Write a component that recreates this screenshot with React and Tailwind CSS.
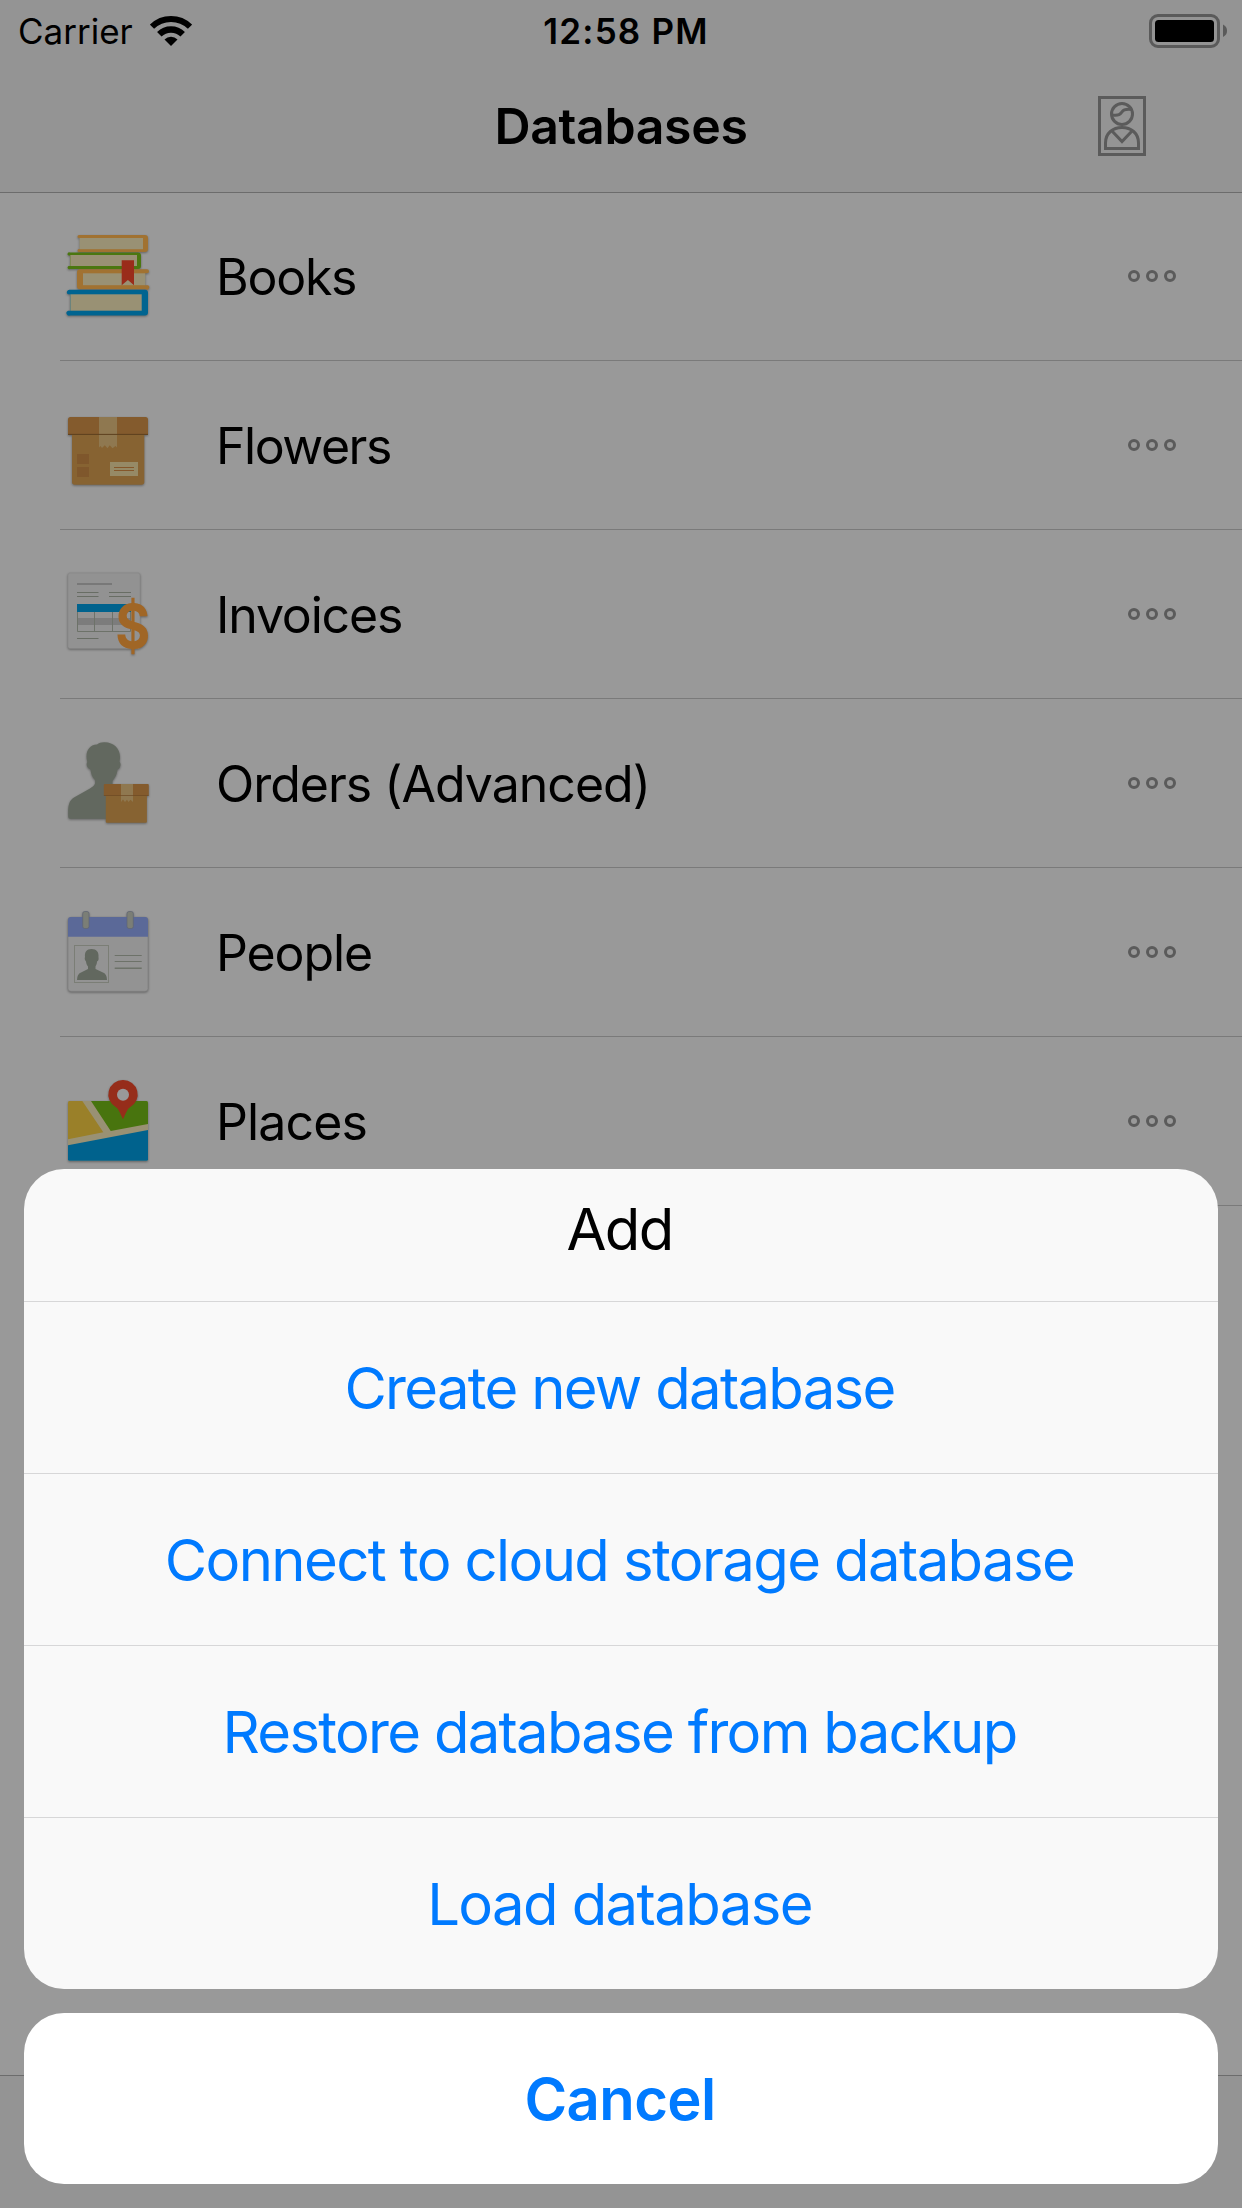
import React from 'react';

const ICON = 'w-[80px] h-[80px] shrink-0 overflow-visible [filter:drop-shadow(0_1px_1px_rgba(0,0,0,0.35))]';

function BooksIcon() {
  return (
    <svg className={`mb-[3px] ${ICON}`} viewBox="0 0 80 80">
      <path d="M11 0H77a3 3 0 0 1 3 3v11a3 3 0 0 1-3 3H11a1.500 1.500 0 0 1 0-3H12V3H11a1.500 1.500 0 0 1 0-3Z" fill="#a17231" />
      <rect x="11.500" y="3" width="63.500" height="11.200" fill="#999174" />
      <path d="M2 17.500H70a3 3 0 0 1 3 3V31a3 3 0 0 1-3 3H2a1.500 1.500 0 0 1-1.500-3H2V20.500H.5A1.500 1.500 0 0 1 2 17.500Z" fill="#4b770f" />
      <rect x="2.300" y="20" width="66.700" height="11" fill="#999174" />
      <path d="M12 34.300H79a1.500 1.500 0 0 1 0 4H77V50.200h3a2 2 0 0 1-2 4.100H12a3 3 0 0 1-3-3v-14a3 3 0 0 1 3-3Z" fill="#a17231" />
      <rect x="15" y="38.300" width="62.300" height="11.900" fill="#999174" />
      <path d="M2 54.800H77a3 3 0 0 1 3 3V77.500a3 3 0 0 1-3 3H2a2 2 0 0 1-2-4.800H2V59.300H0a2.500 2.500 0 0 1 2-4.500Z" fill="#006490" />
      <rect x="2.300" y="59.300" width="71.400" height="16.400" fill="#999174" />
      <path d="M53.700 25.300H66V50.300L59.900 45 53.700 50.300Z" fill="#9a2c1a" />
    </svg>
  );
}

function BoxIcon() {
  return (
    <svg className={`mb-[2px] ${ICON}`} viewBox="0 0 80 80">
      <path d="M4 30H76.300V78a2.700 2.700 0 0 1-2.700 2.700H6.700A2.700 2.700 0 0 1 4 78Z" fill="#876332" />
      <path d="M2.500 13H77.500a2.500 2.500 0 0 1 2.500 2.500V30.800H0V15.500A2.500 2.500 0 0 1 2.500 13Z" fill="#845b2d" />
      <path d="M31 13H49V43.500L47.500 42 44.500 44.300 41.700 41.300 39.500 44.300 36.800 41.300 34 44 32.500 42 31 43.500Z" fill="#8f7850" />
      <rect y="29.900" width="80" height="1" fill="#5e411f" />
      <rect x="9" y="50" width="12" height="10" fill="#7f572c" />
      <rect x="9" y="63" width="12" height="10" fill="#7f572c" />
      <rect x="42" y="58" width="28" height="14" fill="#968a66" />
      <rect x="46" y="63" width="20" height="1" fill="#85572a" />
      <rect x="46" y="66" width="20" height="1" fill="#85572a" />
    </svg>
  );
}

function InvoiceIcon() {
  return (
    <svg className={`mb-[2px] ${ICON}`} viewBox="0 0 80 80">
      <rect x="0" y="0" width="72" height="75.500" rx="2" fill="#929292" stroke="#868686" strokeWidth="0.600" />
      <rect x="9" y="10" width="35" height="2" fill="#787878" />
      <g fill="#686d64">
        <rect x="9" y="19" width="21.500" height="1" />
        <rect x="9" y="23" width="21.500" height="1" />
        <rect x="41" y="19" width="22" height="1" />
        <rect x="41" y="23" width="22" height="1" />
        <rect x="9" y="65" width="21.500" height="1" />
      </g>
      <rect x="9" y="45" width="54" height="7" fill="#7c7c7c" />
      <path d="M9.500 39V58.500H62.500V39M26.500 39V58.500M44.500 39V58.500" fill="none" stroke="#6d7269" />
      <rect x="9" y="31" width="54" height="8" fill="#00628d" />
      <g transform="translate(64.800 75) scale(0.890 1)">
        <text textAnchor="middle" fontSize="60" fontWeight="700" fontFamily="Inter, sans-serif" fill="#a06626">$</text>
      </g>
    </svg>
  );
}

function OrderIcon() {
  return (
    <svg className={`mb-[2px] ${ICON}`} viewBox="0 0 80 80">
      <path d="M36 .3C46 0 52.500 7 52 16L51.500 20C53.500 21 52.500 27 49.500 27.500C48.800 34 46.500 36 44.500 39V42L50 50V76.700H2Q.2 76.700.2 74.500C0 66 0 59 6 55.500L22 46.500C27 43.500 27.500 42 27 38C24 35 23 32 22.500 27.500C18.500 26 18 22 19.300 20C17 11 20 3 29 2.500C31 1 33 .3 36 .3Z" fill="#62685f" />
      <rect x="37.800" y="52" width="41.100" height="28.700" rx="1" fill="#876332" />
      <rect x="35.800" y="42" width="45" height="11.700" rx="1" fill="#845b2d" />
      <path d="M53 42H65V60L62.500 57.800 60.500 60 59 57.800 57 60 55 57.500 53 60Z" fill="#8f7850" />
      <rect x="35.800" y="53" width="45" height="0.700" fill="#6d4a24" />
    </svg>
  );
}

function PeopleIcon() {
  return (
    <svg className={`mb-[2px] ${ICON}`} viewBox="0 0 80 80">
      <rect x="0" y="6.300" width="80" height="74" rx="3" fill="#939393" stroke="#808080" strokeWidth="0.700" />
      <path d="M0 25.700V9a3 3 0 0 1 3-3H77a3 3 0 0 1 3 3V25.700Z" fill="#5b6998" />
      <rect x="14.700" y="0.500" width="6.300" height="17" rx="2" fill="#7b7e76" stroke="#5f6473" strokeWidth="0.700" />
      <rect x="59" y="0.500" width="6.300" height="17" rx="2" fill="#7b7e76" stroke="#5f6473" strokeWidth="0.700" />
      <rect x="6.500" y="34.500" width="34" height="37" fill="#939393" stroke="#7b7e76" />
      <path d="M23.500 38C28.500 38 31 41 30.500 46C31 49 30 50 29 50.500C29 53 28 54 27.500 55.500V58L35 61.500Q39 63 39 69H9Q9 63 13 61.500L20 58V55.500C18.500 54 18.300 52 18 50.500C16.500 49 16.500 47 17 46C16.500 41 18.500 38 23.500 38Z" fill="#62685f" />
      <rect x="46.700" y="44" width="27" height="1" fill="#6d7269" />
      <rect x="46.700" y="50" width="27" height="1" fill="#6d7269" />
      <rect x="46.700" y="56.500" width="27" height="1.500" fill="#6d7269" />
    </svg>
  );
}

function PlacesIcon() {
  return (
    <svg className={`mb-[2px] ${ICON}`} viewBox="0 0 80 80">
      <rect x="0" y="21" width="80" height="59.700" rx="1.500" fill="#999174" />
      <path d="M0 22.500Q0 21 1.500 21H14.300L35.300 52.300 0 59.300Z" fill="#9a8029" />
      <path d="M23 21H78.500Q80 21 80 22.500V44L42.700 51Z" fill="#48740e" />
      <path d="M0 65.300 80 50V79.200Q80 80.700 78.500 80.700H1.500Q0 80.700 0 79.200Z" fill="#00628d" />
      <path d="M55 0A14.500 14.500 0 0 1 62 27.300C59.500 28.700 58 33 55 39.300C52 33 50.500 28.700 48 27.300A14.500 14.500 0 0 1 55 0Z" fill="#962d1a" />
      <circle cx="55" cy="14.700" r="6" fill="#999999" />
    </svg>
  );
}

const databases = [
  { name: 'Books', Icon: BooksIcon, text: 'tracking-[-1.25px]', height: 'h-[168px]', dots: 'mb-[2px]' },
  { name: 'Flowers', Icon: BoxIcon, text: 'mt-[2px] tracking-[-1.45px]', height: 'h-[169px]', dots: '' },
  { name: 'Invoices', Icon: InvoiceIcon, text: 'mt-[2px] tracking-[-1.17px]', height: 'h-[169px]', dots: '' },
  { name: 'Orders (Advanced)', Icon: OrderIcon, text: 'mt-[2px] tracking-[-1px]', height: 'h-[169px]', dots: '' },
  { name: 'People', Icon: PeopleIcon, text: 'mt-[2px] tracking-[-1.1px]', height: 'h-[169px]', dots: '' },
  { name: 'Places', Icon: PlacesIcon, text: 'mt-[2px] tracking-[-0.86px]', height: 'h-[169px]', dots: '' },
];

const actions = [
  { label: 'Create new database', tracking: 'tracking-[-1.7px]' },
  { label: 'Connect to cloud storage database', tracking: 'tracking-[-1.6px]' },
  { label: 'Restore database from backup', tracking: 'tracking-[-1.72px]' },
  { label: 'Load database', tracking: 'tracking-[-1.6px]' },
];

function StatusBar() {
  return (
    <div className="grid h-[60px] grid-cols-3 items-center pt-[2px] pl-[18px] pr-[15px] text-[35px] leading-[42px]">
      <div className="flex items-center">
        <span>Carrier</span>
        <svg className="ml-[17px] h-[32px] w-[42px]" viewBox="150 14 42 32" fill="none" stroke="#000">
          <path d="M152 25.700A27.300 27.300 0 0 1 190 25.700" strokeWidth="6" />
          <path d="M159.300 33.300A16.600 16.600 0 0 1 182.700 33.300" strokeWidth="6.300" />
          <path d="M164.500 38.500A9.200 9.200 0 0 1 177.500 38.500L171 45Z" fill="#000" stroke="none" />
        </svg>
      </div>
      <span className="pl-[7px] text-center font-semibold tracking-[1.2px] whitespace-nowrap">12:58 PM</span>
      <svg className="h-[34px] w-[78px] justify-self-end" viewBox="0 0 78 34">
        <rect x="1.500" y="1.500" width="68" height="31" rx="7.500" fill="none" stroke="#5a5a5a" strokeWidth="3" />
        <rect x="6" y="6" width="59" height="22" rx="3.500" fill="#000" />
        <path d="M74 10.500Q78 12.500 78 16.800T74 23Z" fill="#5a5a5a" />
      </svg>
    </div>
  );
}

function NavBar() {
  return (
    <div className="grid h-[132px] grid-cols-3 items-center">
      <span />
      <h1 className="text-center text-[50px] leading-[60px] font-semibold tracking-[-0.36px]">Databases</h1>
      <svg className="mr-[96px] h-[60px] w-[48px] justify-self-end" viewBox="0 0 48 60" fill="none" stroke="#5b5b5b" strokeWidth="3">
        <rect x="1.500" y="1.500" width="45" height="57" />
        <circle cx="24" cy="18" r="10.500" />
        <path d="M14.500 19C28 20.500 19 12 34 13.500" />
        <path d="M7.500 52.500V47C7.500 37 15 31.500 24 31.500S40.500 37 40.500 47V52.500Z" />
        <path d="M14 35 24 45.500 34 35" />
      </svg>
    </div>
  );
}

export default function App() {
  return (
    <div className="relative flex h-[2208px] w-[1242px] flex-col overflow-hidden bg-[#999999] font-['Inter',sans-serif] text-black">
      <header className="h-[193px] shrink-0 border-b border-[#6c6c6c] bg-[#949494]">
        <StatusBar />
        <NavBar />
      </header>
      <main className="flex-1">
        <ul className="pl-[60px]">
          {databases.map(({ name, Icon, text, height, dots }) => (
            <li key={name} className={`flex items-center border-b border-[#7a7a7a] pl-[8px] pr-[66px] ${height}`}>
              <Icon />
              <span className={`ml-[68px] flex-1 text-[50px] leading-[60px] ${text}`}>{name}</span>
              <svg className={`h-[12px] w-[48px] ${dots}`} viewBox="0 0 48 12" fill="none" stroke="#5b5b5b" strokeWidth="3">
                <circle cx="6" cy="6" r="4.500" />
                <circle cx="24" cy="6" r="4.500" />
                <circle cx="42" cy="6" r="4.500" />
              </svg>
            </li>
          ))}
        </ul>
      </main>
      <footer className="h-[133px] shrink-0 border-t border-[#6c6c6c] bg-[#949494]" />

      <div className="absolute inset-x-[24px] bottom-[24px] flex flex-col gap-[24px] text-[58px] leading-[70px]">
        <div className="flex flex-col overflow-hidden rounded-[40px] bg-[#f9f9f9]">
          <div className="h-[132px] pt-[25px] pr-[3px] text-center tracking-[-1.6px]">Add</div>
          {actions.map(({ label, tracking }) => (
            <button key={label} className={`h-[172px] border-t border-[#d7d7d8] pr-[3px] text-[#007aff] ${tracking}`}>
              {label}
            </button>
          ))}
        </div>
        <button className="h-[171px] rounded-[40px] bg-white pr-[2px] font-semibold tracking-[-0.6px] text-[#007aff]">Cancel</button>
      </div>
    </div>
  );
}
